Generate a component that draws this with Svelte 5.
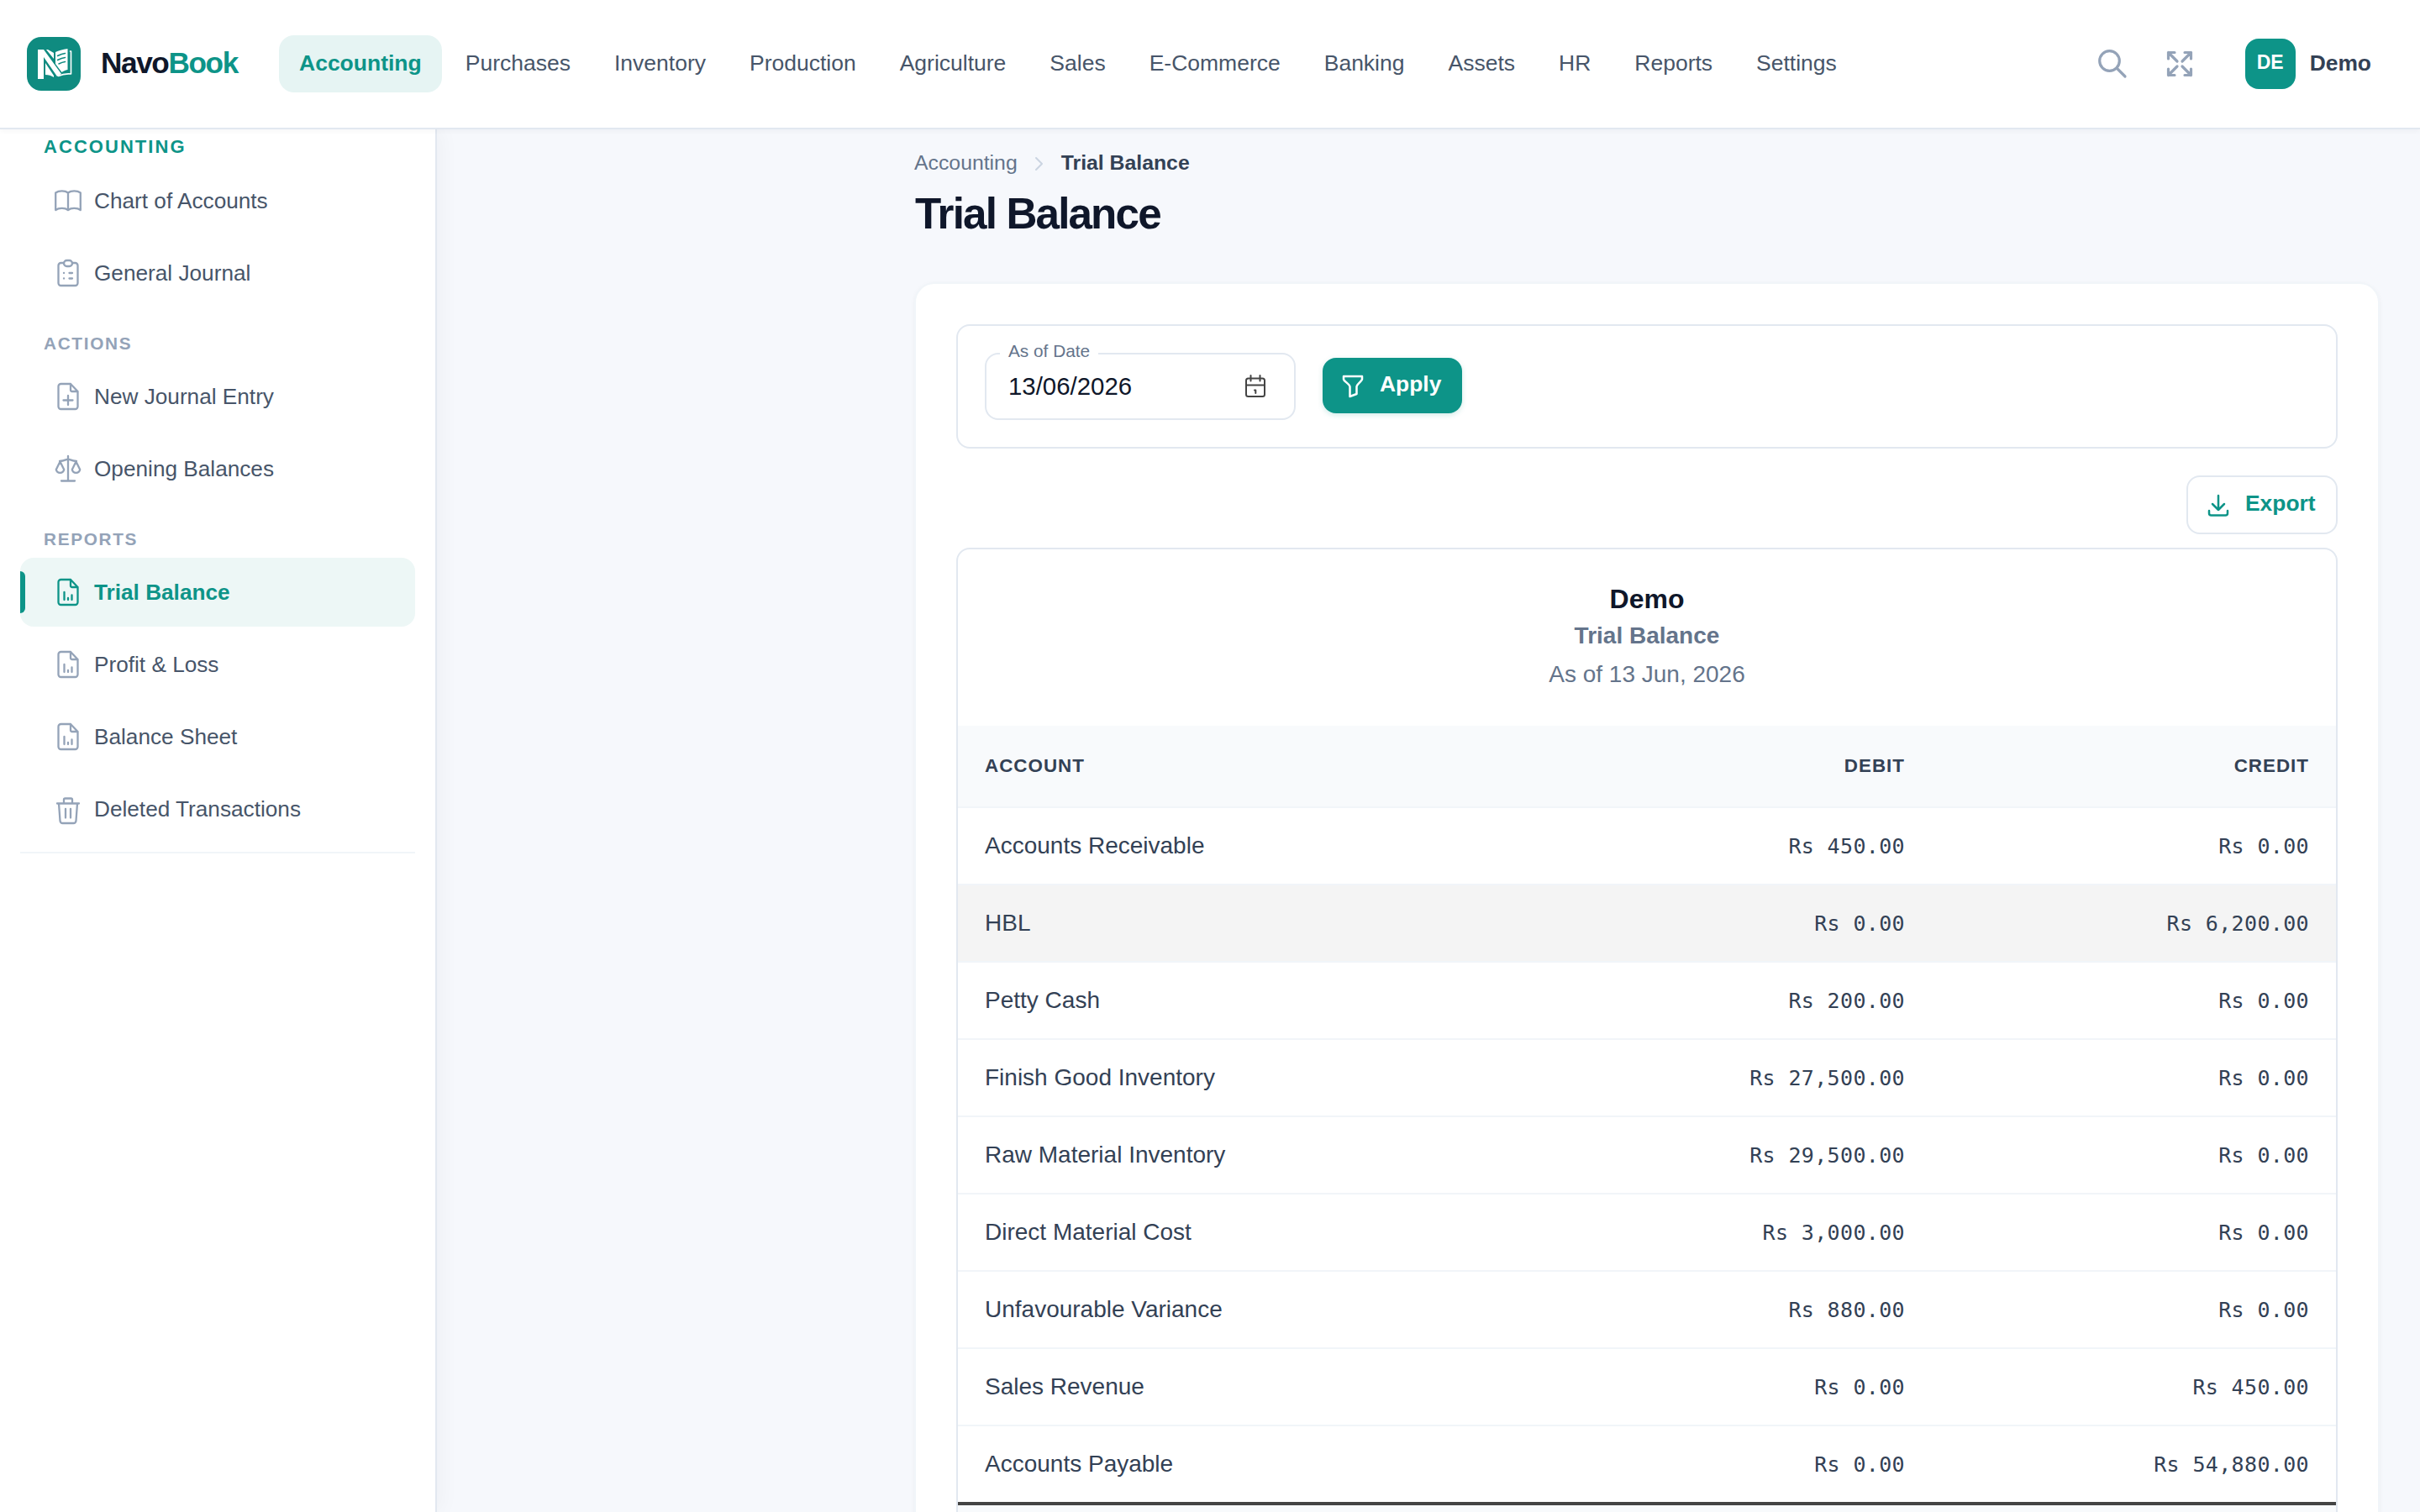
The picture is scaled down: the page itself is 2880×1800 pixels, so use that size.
<script lang="ts">
	type IconName = 'book' | 'clipboard' | 'file-plus' | 'scale' | 'file-chart' | 'trash';

	interface MenuItem {
		label: string;
		icon: IconName;
		active?: boolean;
	}

	interface MenuSection {
		title: string;
		items: MenuItem[];
	}

	const modules = [
		'Accounting',
		'Purchases',
		'Inventory',
		'Production',
		'Agriculture',
		'Sales',
		'E-Commerce',
		'Banking',
		'Assets',
		'HR',
		'Reports',
		'Settings'
	];
	let activeModule = $state('Accounting');

	const sections: MenuSection[] = [
		{
			title: 'Accounting',
			items: [
				{ label: 'Chart of Accounts', icon: 'book' },
				{ label: 'General Journal', icon: 'clipboard' }
			]
		},
		{
			title: 'Actions',
			items: [
				{ label: 'New Journal Entry', icon: 'file-plus' },
				{ label: 'Opening Balances', icon: 'scale' }
			]
		},
		{
			title: 'Reports',
			items: [
				{ label: 'Trial Balance', icon: 'file-chart', active: true },
				{ label: 'Profit & Loss', icon: 'file-chart' },
				{ label: 'Balance Sheet', icon: 'file-chart' },
				{ label: 'Deleted Transactions', icon: 'trash' }
			]
		}
	];

	const rows = [
		{ account: 'Accounts Receivable', debit: 450, credit: 0 },
		{ account: 'HBL', debit: 0, credit: 6200, highlighted: true },
		{ account: 'Petty Cash', debit: 200, credit: 0 },
		{ account: 'Finish Good Inventory', debit: 27500, credit: 0 },
		{ account: 'Raw Material Inventory', debit: 29500, credit: 0 },
		{ account: 'Direct Material Cost', debit: 3000, credit: 0 },
		{ account: 'Unfavourable Variance', debit: 880, credit: 0 },
		{ account: 'Sales Revenue', debit: 0, credit: 450 },
		{ account: 'Accounts Payable', debit: 0, credit: 54880 }
	];

	function money(value: number) {
		return 'Rs ' + value.toLocaleString('en-US', { minimumFractionDigits: 2 });
	}
</script>

{#snippet menuIcon(name: IconName)}
	<svg class="menu-icon" viewBox="0 0 32 32" aria-hidden="true">
		{#if name === 'book'}
			<path d="M16 6.5C12.5 3.6 5 3.6 1.2 6.5V27c3.8-2.9 11.3-2.9 14.8 0 3.5-2.9 11-2.9 14.8 0V6.5C27 3.6 19.5 3.6 16 6.5zM16 6.5V27" />
		{:else if name === 'clipboard'}
			<path d="M11 4H7.500a3 3 0 0 0-3 3v21a3 3 0 0 0 3 3h17a3 3 0 0 0 3-3V7a3 3 0 0 0-3-3H21" />
			<rect x="11" y="1" width="10" height="7" rx="3.5" />
			<path d="M11 16h.1M17.5 16H21M11 22.5h.1M17.5 22.5H21" />
		{:else if name === 'file-plus'}
			<path d="M19 1H7.500a3 3 0 0 0-3 3v24a3 3 0 0 0 3 3h17a3 3 0 0 0 3-3V10zM19 1v7a2 2 0 0 0 2 2h6.500M16 15v11M10.5 20.5h11" />
		{:else if name === 'scale'}
			<path d="M16 1v29.5M8 30.5h16M6 7c4 0 7-1.5 10-2.5C19 5.5 22 7 26 7M6.5 7.5 1.8 17a4.8 4.8 0 0 0 9.4 0zM25.5 7.5 20.8 17a4.8 4.8 0 0 0 9.4 0z" />
		{:else if name === 'file-chart'}
			<path d="M19 1H7.500a3 3 0 0 0-3 3v24a3 3 0 0 0 3 3h17a3 3 0 0 0 3-3V10zM19 1v7a2 2 0 0 0 2 2h6.500M11.5 16v9M16 23v2M20.5 19.5V25" />
		{:else}
			<path d="M3 9.5h26M11 9.5V5a1.500 1.500 0 0 1 1.500-1.500h7A1.500 1.500 0 0 1 21 5v4.500M5 9.5 6.500 30a3 3 0 0 0 3 3h13a3 3 0 0 0 3-3L27 9.5M13 16v10.5M19 16v10.5" />
		{/if}
	</svg>
{/snippet}

<div class="app">
	<header class="topbar">
		<div class="brand">
			<svg class="logo" viewBox="0 0 64 64" aria-hidden="true">
				<rect width="64" height="64" rx="17" fill="#0f8b80" />
				<g fill="#fff">
					<path d="M13 15h7l21 29-5 3-16-23v26h-7z" />
					<path d="M23 15h2l7 4v7z" />
					<path d="M34 18c4-2 8-3 14.500-4v25c-3 .5-5 1.500-7 3l-7.500-10z" />
					<path d="M22 31l10 15v2c-3-2-6-3-10-3z" />
				</g>
				<path d="M51.500 17h1v27c-6-.5-11 .5-15 2.500" fill="none" stroke="#fff" stroke-width="1.6" />
				<path d="M36.500 22.500c3-1.500 5-2.500 9-3M36.500 27.500c3-1.500 5-2.500 9-3M38 32c3-1.500 4-2 7.500-2.500" fill="none" stroke="#0f8b80" stroke-width="1.6" />
			</svg>
			<span class="brand-name">Navo<span>Book</span></span>
		</div>

		<nav class="modules">
			{#each modules as name}
				<button class:active={name === activeModule} onclick={() => (activeModule = name)}>{name}</button>
			{/each}
		</nav>

		<div class="tools">
			<svg class="tool-icon" viewBox="0 0 36 36" aria-label="Search">
				<circle cx="14.5" cy="14.5" r="11.8" />
				<path d="M23 23l10 10" />
			</svg>
			<svg class="tool-icon expand" viewBox="0 0 36 36" aria-label="Full screen">
				<path d="M15 15 4.5 4.500M4.500 12V4.500H12M21 15 31.500 4.500M24 4.500h7.500V12M15 21 4.500 31.500M4.500 24v7.500H12M21 21l10.500 10.500M24 31.500h7.500V24" />
			</svg>
			<div class="avatar">DE</div>
			<span class="user">Demo</span>
		</div>
	</header>

	<div class="body">
		<aside class="sidebar">
			{#each sections as section, i}
				<h2 class:lead={i === 0}>{section.title}</h2>
				<ul>
					{#each section.items as item}
						<li class:active={item.active}>
							{@render menuIcon(item.icon)}
							<span>{item.label}</span>
						</li>
					{/each}
				</ul>
			{/each}
			<hr />
		</aside>

		<main>
			<div class="breadcrumb">
				<span>Accounting</span>
				<svg viewBox="0 0 12 18" aria-hidden="true"><path d="M2 2l7 7-7 7" /></svg>
				<strong>Trial Balance</strong>
			</div>
			<h1>Trial Balance</h1>

			<section class="card">
				<div class="filters">
					<div class="date-field">
						<span class="date-label">As of Date</span>
						<span class="date-value">13/06/2026</span>
						<svg viewBox="0 0 26 28" aria-hidden="true">
							<rect x="2" y="4.5" width="22" height="21.5" rx="2.5" />
							<path d="M2 12.500h22M7.500 1v6.500M18.500 1v6.500M12 18.500h1.300v3.500" />
						</svg>
					</div>
					<button class="apply">
						<svg viewBox="0 0 26 28" aria-hidden="true">
							<path d="M2 2h22v3.500c0 2-6.500 6-6.500 9v8.500l-8 3V14.500C9.500 11.500 2 7.500 2 5.500z" />
						</svg>
						<span>Apply</span>
					</button>
				</div>

				<div class="actions">
					<button class="export">
						<svg viewBox="0 0 26 28" aria-hidden="true">
							<path d="M13 2v17M6 12l7 7 7-7M2 20v3a2.500 2.500 0 0 0 2.500 2.500h17A2.500 2.500 0 0 0 24 23v-3" />
						</svg>
						<span>Export</span>
					</button>
				</div>

				<div class="report">
					<div class="report-head">
						<div class="company">Demo</div>
						<div class="report-name">Trial Balance</div>
						<div class="as-of">As of 13 Jun, 2026</div>
					</div>
					<table>
						<thead>
							<tr>
								<th>Account</th>
								<th class="amount">Debit</th>
								<th class="amount">Credit</th>
							</tr>
						</thead>
						<tbody>
							{#each rows as row}
								<tr class:highlighted={row.highlighted}>
									<td>{row.account}</td>
									<td class="amount">{money(row.debit)}</td>
									<td class="amount">{money(row.credit)}</td>
								</tr>
							{/each}
						</tbody>
						<tfoot>
							<tr><td colspan="3"></td></tr>
						</tfoot>
					</table>
				</div>
			</section>
		</main>
	</div>
</div>

<style>
	:global(body) {
		margin: 0;
		overflow: hidden;
	}

	.app {
		display: flex;
		flex-direction: column;
		height: 1800px;
		overflow: hidden;
		background: #f6f8fc;
		color: #334155;
		font-family: 'Liberation Sans', Arial, sans-serif;
		font-size: 28px;
	}

	.app * {
		box-sizing: border-box;
	}

	svg {
		display: block;
		flex: none;
		fill: none;
		stroke: currentColor;
		stroke-width: 2;
		stroke-linecap: round;
		stroke-linejoin: round;
	}

	button {
		border: 0;
		background: none;
		font: inherit;
	}

	/* top bar */
	.topbar {
		position: relative;
		z-index: 2;
		display: flex;
		flex: none;
		align-items: center;
		height: 154px;
		padding: 0 58px 0 32px;
		border-bottom: 2px solid #e2e8f0;
		background: #fff;
		box-shadow: 0 2px 6px rgba(15, 23, 42, 0.04);
	}

	.brand {
		display: flex;
		align-items: center;
		gap: 24px;
		width: 300px;
	}

	.logo {
		width: 64px;
		height: 64px;
		stroke: none;
	}

	.brand-name {
		padding-bottom: 3px;
		color: #0f172a;
		font-size: 35.2px;
		font-weight: 700;
		letter-spacing: -1.4px;
		line-height: 44px;
	}

	.brand-name span {
		color: #0d9488;
	}

	.modules {
		display: flex;
		gap: 4px;
	}

	.modules button {
		height: 68px;
		padding: 0 24px 2px;
		border-radius: 18px;
		color: #475569;
		font-size: 26.5px;
		white-space: nowrap;
	}

	.modules .active {
		background: #e6f4f3;
		color: #0d9488;
		font-weight: 700;
	}

	.tools {
		display: flex;
		align-items: center;
		margin-left: auto;
	}

	.tool-icon {
		width: 36px;
		height: 36px;
		margin-right: 44px;
		color: #94a3b8;
		stroke-width: 3.2;
	}

	.tool-icon.expand {
		margin-right: 60px;
	}

	.avatar {
		width: 60px;
		height: 60px;
		margin-right: 17px;
		border-radius: 16px;
		background: #0d9488;
		color: #fff;
		font-size: 23px;
		font-weight: 700;
		line-height: 57px;
		text-align: center;
	}

	.user {
		padding-bottom: 2px;
		font-size: 26.4px;
		font-weight: 700;
	}

	.body {
		display: flex;
		flex: 1;
		min-height: 0;
	}

	/* sidebar */
	.sidebar {
		z-index: 1;
		flex: none;
		width: 520px;
		padding: 0 24px;
		border-right: 2px solid #e2e8f0;
		background: #fff;
		box-shadow: 4px 0 24px rgba(15, 23, 42, 0.04);
	}

	.sidebar h2 {
		height: 65px;
		margin: 0;
		padding: 31px 28px 0;
		color: #94a3b8;
		font-size: 20.8px;
		letter-spacing: 1.66px;
		line-height: 24px;
		text-transform: uppercase;
	}

	.sidebar h2.lead {
		height: 44px;
		padding-top: 9px;
		color: #0d9488;
		font-size: 22px;
		letter-spacing: 2.05px;
	}

	.sidebar ul {
		display: grid;
		gap: 4px;
		margin: 0;
		padding: 0;
		list-style: none;
	}

	.sidebar li {
		position: relative;
		display: flex;
		align-items: center;
		gap: 15px;
		height: 82px;
		padding-left: 41px;
		border-radius: 16px;
		color: #475569;
		font-size: 26.2px;
	}

	.menu-icon {
		width: 32px;
		height: 32px;
		overflow: visible;
		color: #94a3b8;
		stroke-width: 2.3;
	}

	.sidebar li.active {
		background: #edf7f6;
		color: #0d9488;
		font-weight: 700;
	}

	.sidebar li.active .menu-icon {
		color: #0d9488;
	}

	.sidebar li.active::before {
		content: '';
		position: absolute;
		top: 16px;
		bottom: 16px;
		left: 0;
		width: 6px;
		border-radius: 0 6px 6px 0;
		background: #0d9488;
	}

	.sidebar hr {
		height: 2px;
		margin: 10px 0 0;
		border: 0;
		background: #f1f5f9;
	}

	/* page */
	main {
		flex: 1;
		padding: 24px 48px 0 568px;
	}

	.breadcrumb {
		display: flex;
		align-items: center;
		height: 32px;
		color: #64748b;
		font-size: 24.8px;
	}

	.breadcrumb svg {
		width: 12px;
		height: 18px;
		margin: 2px 20px 0;
		color: #cbd5e1;
	}

	.breadcrumb strong {
		color: #334155;
	}

	h1 {
		margin: 15px 0 52px 1px;
		color: #0f172a;
		font-size: 51.2px;
		letter-spacing: -1.85px;
		line-height: 59px;
	}

	.card {
		height: 1600px;
		padding: 48px;
		border: 2px solid #f1f5f9;
		border-radius: 24px;
		background: #fff;
		box-shadow: 0 2px 6px rgba(15, 23, 42, 0.04);
	}

	.filters {
		display: flex;
		align-items: flex-start;
		gap: 32px;
		height: 148px;
		padding: 32px;
		border: 2px solid #e2e8f0;
		border-radius: 16px;
	}

	.date-field {
		position: relative;
		display: flex;
		align-items: center;
		justify-content: space-between;
		width: 370px;
		height: 80px;
		padding: 0 33px 0 26px;
		border: 2px solid #e2e8f0;
		border-radius: 16px;
		color: #0f172a;
	}

	.date-label {
		position: absolute;
		top: -16px;
		left: 16px;
		padding: 0 10px;
		background: #fff;
		color: #64748b;
		font-size: 20.8px;
		line-height: 24px;
	}

	.date-value {
		font-size: 29.4px;
	}

	.date-field svg {
		width: 26px;
		height: 28px;
		color: #444;
	}

	.apply,
	.export {
		display: flex;
		align-items: center;
		font-size: 26.4px;
		font-weight: 700;
		line-height: 30px;
	}

	.apply span,
	.export span {
		padding-bottom: 2px;
	}

	.apply svg,
	.export svg {
		width: 26px;
		height: 28px;
		margin: 4px 19px 0 0;
		stroke-width: 2.5;
	}

	.apply {
		width: 166px;
		height: 66px;
		margin-top: 6px;
		padding: 0 0 2px 23px;
		border-radius: 16px;
		background: #0d9488;
		color: #fff;
		box-shadow: 0 2px 6px rgba(13, 148, 136, 0.2);
	}

	.actions {
		display: flex;
		justify-content: flex-end;
		margin: 32px 0 16px;
	}

	.export {
		width: 180px;
		height: 70px;
		padding: 0 0 3px 23px;
		border: 2px solid #e2e8f0;
		border-radius: 16px;
		background: #fff;
		color: #0d9488;
	}

	.report {
		overflow: hidden;
		height: 1400px;
		border: 2px solid #e2e8f0;
		border-radius: 16px;
	}

	.report-head {
		height: 210px;
		padding-top: 37px;
		text-align: center;
		color: #64748b;
	}

	.company {
		color: #0f172a;
		font-size: 32px;
		font-weight: 700;
		line-height: 44px;
	}

	.report-name {
		font-weight: 700;
		line-height: 44px;
	}

	.as-of {
		line-height: 48px;
	}

	table {
		width: 100%;
		table-layout: fixed;
		border-spacing: 0;
	}

	th,
	td {
		padding: 0 32px;
		border-bottom: 2px solid #f1f5f9;
		text-align: left;
	}

	th {
		height: 98px;
		background: #f8fafc;
		font-size: 22.4px;
		letter-spacing: 1px;
		text-transform: uppercase;
	}

	th:nth-child(2) {
		width: 482px;
	}

	th:nth-child(3) {
		width: 481px;
	}

	td {
		height: 92px;
	}

	.amount {
		text-align: right;
	}

	td.amount {
		font-family: Consolas, 'DejaVu Sans Mono', monospace;
		font-size: 25px;
		letter-spacing: 0.35px;
	}

	.highlighted td {
		background: #f4f4f4;
	}

	tbody tr:last-child td {
		height: 90px;
		border-bottom: 0;
	}

	tfoot td {
		border-top: 4px solid #444;
		background: #f8fafc;
	}
</style>
